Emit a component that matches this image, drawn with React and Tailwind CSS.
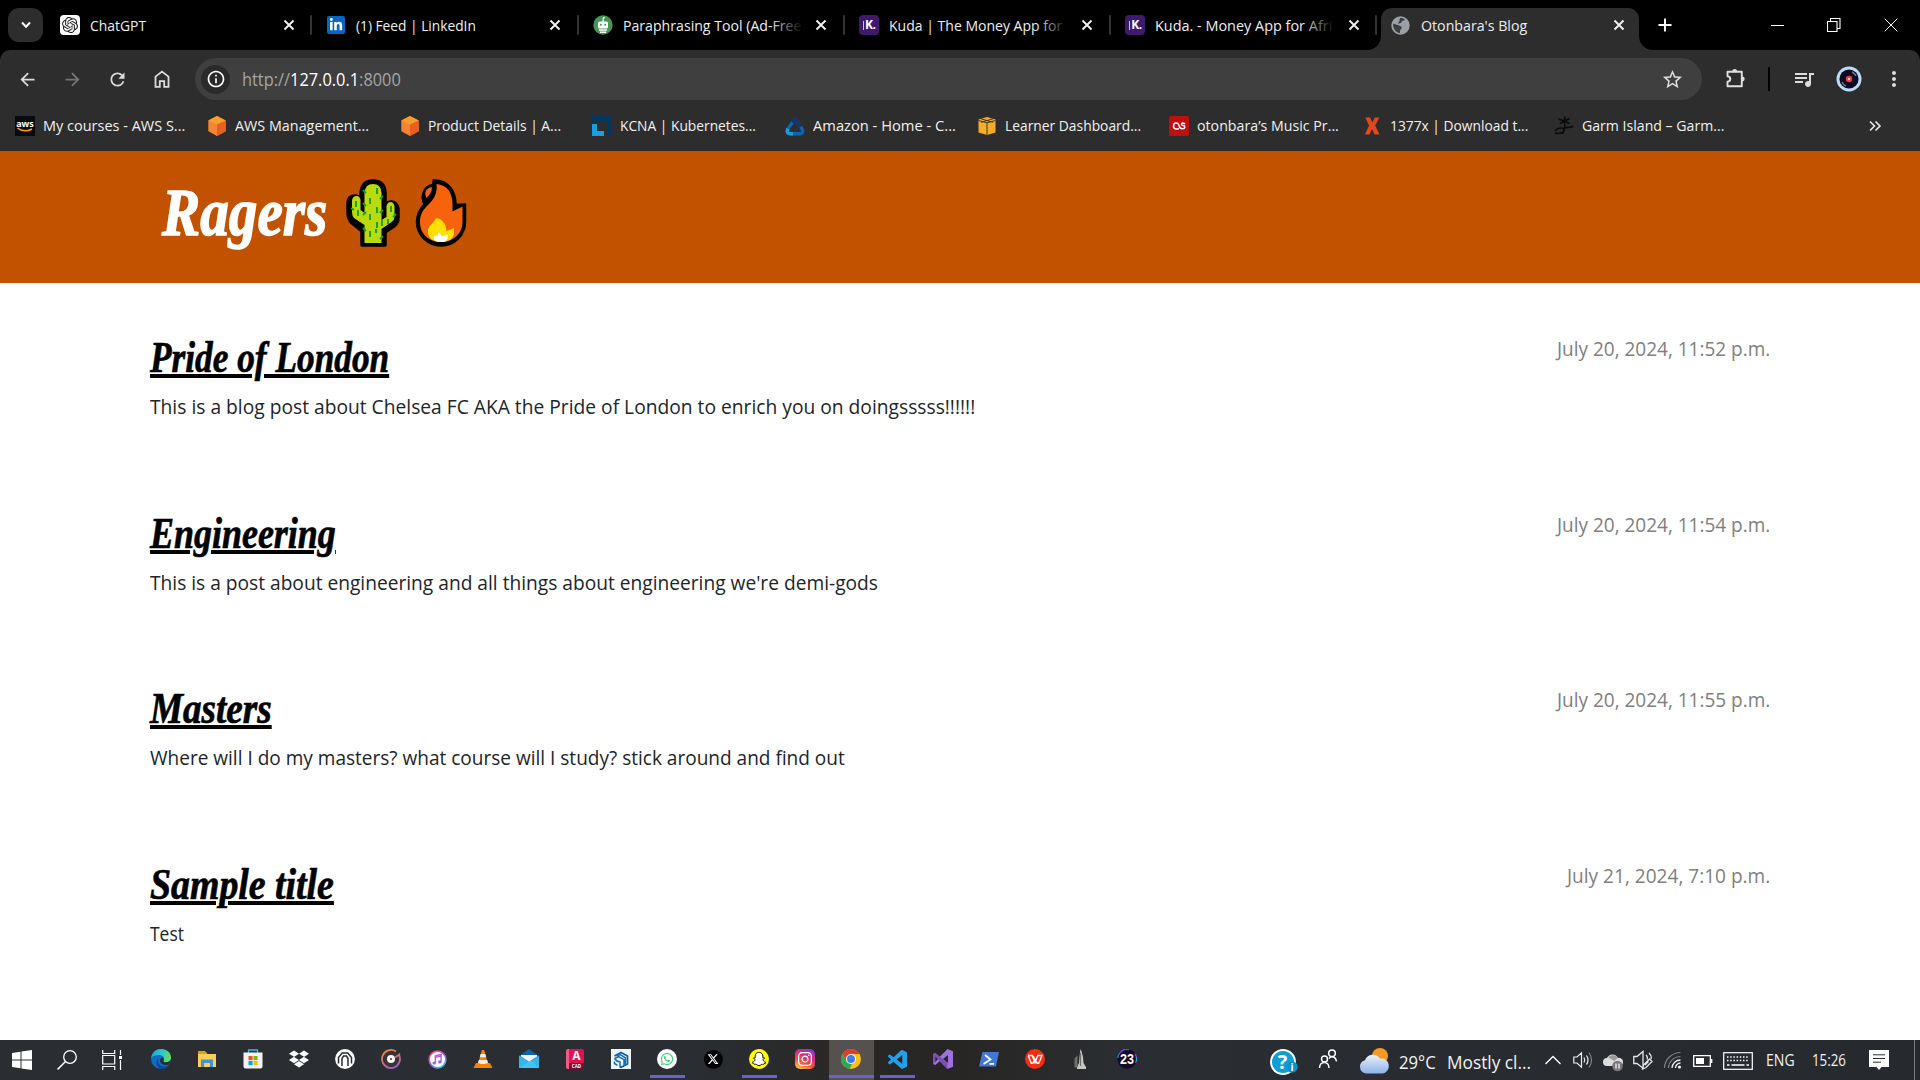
import React, { useLayoutEffect, useRef } from "react";
import { SiOpenai } from "react-icons/si";
import { FaDropbox, FaInstagram, FaLinkedinIn, FaSnapchatGhost, FaWhatsapp } from "react-icons/fa";
import { FaXTwitter } from "react-icons/fa6";
import { BiLogoVisualStudio } from "react-icons/bi";
import {
  MdArrowBack, MdArrowForward, MdRefresh, MdInfoOutline, MdStarBorder,
  MdOutlineQueueMusic, MdMoreVert,
} from "react-icons/md";

/* Text squeezed or stretched horizontally to a fixed width. */
function Fit({ w, className = "", children }) {
  const ref = useRef(null);
  useLayoutEffect(() => {
    const el = ref.current;
    el.style.transform = `scaleX(${w / el.offsetWidth})`;
  }, [w]);
  return (
    <span className="block shrink-0" style={{ width: w }}>
      <span ref={ref} className={`inline-block origin-left whitespace-nowrap align-top ${className}`}>{children}</span>
    </span>
  );
}

function Svg({ s = 20, vb = "0 0 20 20", children, className = "" }) {
  return (
    <svg width={s} height={s} viewBox={vb} className={`shrink-0 ${className}`} fill="none">
      {children}
    </svg>
  );
}

/* ---------- tab strip ---------- */

const Kuda = () => (
  <span className="flex h-5 w-5 items-center justify-center gap-px rounded-[4px] bg-[#40196d] text-[12px] font-bold leading-none tracking-tighter text-white">
    <span className="h-[9px] w-[1.5px] bg-[#cbbfd8]" />
    <span>K.</span>
  </span>
);

const Quill = () => (
  <Svg>
    <circle cx="10" cy="10" r="9.7" fill="#499557" />
    <path d="M10.2 7V3.2l1.6-1" stroke="#fff" strokeWidth="1.2" />
    <rect x="5" y="6.5" width="10" height="7" rx="1.6" fill="#fff" />
    <circle cx="7.8" cy="9.7" r="1" fill="#499557" />
    <circle cx="12.2" cy="9.7" r="1" fill="#499557" />
    <path d="M6 15h8M7 17.2h6" stroke="#fff" strokeWidth="1.4" />
  </Svg>
);

const CloseX = () => (
  <Svg s={12} vb="0 0 12 12"><path d="M1.500 1.500l9 9M10.500 1.500l-9 9" stroke="#f2f2f2" strokeWidth="1.900" /></Svg>
);

const Globe = () => (
  <Svg s={19} vb="0 0 19 19">
    <circle cx="9.500" cy="9.500" r="9.200" fill="#9aa0a6" />
    <path d="M2.300 7.500c2 .5 3 1.500 4.500 1.500s2.200 1.500 3.700 1.500v2.500c-1.500 0-1.500 1.500-1.500 4C4.500 16.500 1.500 12 2.300 7.500zM9 2.200c2-.3 3.500.3 4.700 1.300-.7 1.500-1.700 1-2.700 1.500s0 2-1.500 2-1.500 1-2 1c-.8-1.500 1-2 1-3.200C8.500 4 8.500 3 9 2.200z" fill="#3b3d3f" />
  </Svg>
);

const tabs = [
  { t: "ChatGPT", w: 56.5, icon: <span className="flex h-5 w-5 items-center justify-center rounded-[4px] bg-white text-[#222]"><SiOpenai size={16} /></span> },
  { t: "(1) Feed | LinkedIn", w: 120, icon: <span className="ml-px flex h-[18px] w-[18px] items-center justify-center rounded-[2px] bg-[#0a66c2] text-white"><FaLinkedinIn size={14} /></span> },
  { t: "Paraphrasing Tool (Ad-Free", w: 178, icon: <Quill />, fade: true },
  { t: "Kuda | The Money App for", w: 173, icon: <Kuda />, fade: true },
  { t: "Kuda. - Money App for Afri", w: 177, icon: <Kuda />, fade: true },
];

function Tab({ t, w, icon, fade }) {
  return (
    <div className="flex h-[34px] w-[266.3px] items-center pl-[14px]">
      <span className="w-[30px]">{icon}</span>
      <span className="relative w-[188px]">
        <Fit w={w}>{t}</Fit>
        {fade && <span className="absolute inset-y-0 left-[146px] w-[34px] bg-gradient-to-r from-transparent to-black" />}
      </span>
      <span className="flex w-[21px] justify-center"><CloseX /></span>
      <span className="ml-auto h-5 w-[2px] rounded bg-[#333]" />
    </div>
  );
}

function TabStrip() {
  return (
    <div className="flex h-[50px] bg-black pt-2 text-[15px] leading-[34px] text-[#eee]">
      <div className="ml-2 mr-[3px] flex h-[34px] w-[35px] items-center justify-center rounded-[11px] bg-[#2d2d2d]">
        <Svg s={14} vb="0 0 14 14"><path d="M3 4.5l4 4.200 4-4.200" stroke="#fff" strokeWidth="2" /></Svg>
      </div>
      {tabs.map((x) => <Tab key={x.t} {...x} />)}
      <div className="relative ml-[3.5px] flex h-[42px] w-[258px] items-start rounded-t-[11px] bg-[#2d2d2d] pl-[10px]">
        <Svg s={14} vb="0 0 14 14" className="absolute -left-[14px] bottom-0"><path d="M14 0v14H0A14 14 0 0 0 14 0z" fill="#2d2d2d" /></Svg>
        <Svg s={14} vb="0 0 14 14" className="absolute -right-[14px] bottom-0"><path d="M0 0v14h14A14 14 0 0 1 0 0z" fill="#2d2d2d" /></Svg>
        <span className="flex h-[34px] w-[30px] items-center"><Globe /></span>
        <Fit w={106}>Otonbara's Blog</Fit>
        <span className="ml-[86px] flex h-[34px] w-[18px] items-center"><CloseX /></span>
      </div>
      <div className="ml-[14px] flex h-[34px] w-6 items-center justify-center">
        <Svg s={14} vb="0 0 14 14"><path d="M7 .500v13M.500 7h13" stroke="#fff" strokeWidth="1.900" /></Svg>
      </div>
      <div className="ml-auto flex h-[34px] items-center text-white">
        <span className="flex w-[57px] justify-center"><span className="h-px w-[13px] bg-white" /></span>
        <span className="flex w-[56px] justify-center">
          <Svg s={14} vb="0 0 14 14"><path d="M.5 3.500h9.500V13.500H.5zM3.500 3.500V.5H13v10h-3" stroke="#fff" strokeWidth="1.100" /></Svg>
        </span>
        <span className="flex w-[58px] justify-center">
          <Svg s={14} vb="0 0 14 14"><path d="M.7.700l12.600 12.600M13.300.700L.700 13.300" stroke="#fff" strokeWidth="1" /></Svg>
        </span>
      </div>
    </div>
  );
}

/* ---------- toolbar and bookmarks ---------- */

function Toolbar() {
  return (
    <div className="flex h-[58px] items-center text-[#dcdcdc]">
      <span className="flex w-[45px] justify-center pl-[10px]"><MdArrowBack size={21} /></span>
      <span className="flex w-[45px] justify-center pl-[10px] text-[#757575]"><MdArrowForward size={21} /></span>
      <span className="flex w-[45px] justify-center pl-[10px]"><MdRefresh size={21} /></span>
      <span className="flex w-[45px] justify-center pl-[9px]">
        <Svg><path d="M3.500 17.800V7.600L10 2.600l6.500 5v10.200h-4.300v-5.600H7.800v5.600z" stroke="#dcdcdc" strokeWidth="1.800" /></Svg>
      </span>
      <div className="ml-[15px] flex h-[42px] w-[1507px] items-center rounded-full bg-[#3f3f3f] pl-[6px] pr-[18px]">
        <span className="mr-[12px] flex h-[29px] w-[29px] items-center justify-center rounded-full bg-[#2a2a2a] text-white"><MdInfoOutline size={20} /></span>
        <Fit w={159} className="text-[17.5px] leading-[42px] text-[#a5a5a5]">http://<span className="text-white">127.0.0.1</span>:8000</Fit>
        <span className="ml-auto"><MdStarBorder size={23} /></span>
      </div>
      <span className="ml-[23px]">
        <Svg s={22} vb="0 0 22 22">
          <path d="M2.500 3.700h14.300v14.600H2.500v-4.600q2.800-.4 2.800-2.700T2.500 8.300z" stroke="#e0e0e0" strokeWidth="1.900" strokeLinejoin="round" />
          <path d="M7.300 3.500a2.400 2.600 0 0 1 4.800 0zM17 8.600a2.600 2.400 0 0 1 0 4.800z" fill="#e0e0e0" />
        </Svg>
      </span>
      <span className="ml-[21px] h-6 w-[1.500px] bg-black" />
      <span className="ml-[22px]"><MdOutlineQueueMusic size={24} /></span>
      <span className="ml-[20px]">
        <Svg s={26} vb="0 0 26 26">
          <circle cx="13" cy="13" r="12.500" fill="#b9dcfb" /><circle cx="13" cy="13" r="9.600" fill="#0d0a20" />
          <path d="M16 6a8 8 0 0 1 4 4M10 20a8 8 0 0 1-4-4" stroke="#777" strokeWidth="1.500" />
          <circle cx="13" cy="13" r="3.200" fill="#e8305f" /><circle cx="13" cy="13" r="1.300" fill="#ffd45c" />
        </Svg>
      </span>
      <span className="ml-[20px]"><MdMoreVert size={24} /></span>
    </div>
  );
}

const AwsCube = () => (
  <Svg><path d="M10 0l8.700 4.500v10.800L10 20l-8.700-4.700V4.500z" fill="#f58534" /><path d="M10 0l8.700 4.500L10 8.600 1.300 4.500z" fill="#fb9d2c" /><path d="M10 8.600l8.700-4.100v10.800L10 20z" fill="#e8601f" /></Svg>
);

const bookmarks = [
  { t: "My courses - AWS S...", w: 142, icon: (
    <Svg><rect width="20" height="20" fill="#070b10" /><text x="10" y="10.500" textAnchor="middle" fontSize="9" fontWeight="700" fill="#fff" fontFamily="Open Sans">aws</text><path d="M2.500 12.200c4.500 3.300 10.500 3.300 14.500.800" stroke="#f90" strokeWidth="1.600" /></Svg>) },
  { t: "AWS Management...", w: 134, icon: <AwsCube /> },
  { t: "Product Details | A...", w: 133, icon: <AwsCube /> },
  { t: "KCNA | Kubernetes...", w: 136, icon: (
    <Svg><path d="M0 0h20v20h-5V5H0z" fill="#04365f" /><path d="M0 8h5v7h7v5H0z" fill="#189fdf" /></Svg>) },
  { t: "Amazon - Home - C...", w: 143, icon: (
    <Svg><path d="M10 2.500C7 8 2.300 12 2.300 15.300c0 3 3.500 2.500 7.700 2.500s7.700.500 7.700-2.500C17.700 12 13 8 10 2.500z" stroke="#0b64b4" strokeWidth="3.400" strokeLinejoin="round" /><path d="M7.500 6.500L10 2.500c2 3.500 4.200 6 5.800 8.300" stroke="#15336d" strokeWidth="3.400" strokeLinejoin="round" /><path d="M3 12.500c-2.500 6 2 5.300 5 5.300" stroke="#179bdd" strokeWidth="3.400" /></Svg>) },
  { t: "Learner Dashboard...", w: 136.5, icon: (
    <Svg><path d="M10 1l8.500 2.500v13L10 19l-8.500-2.500v-13z" fill="#f5ad27" /><path d="M1.500 4.500L10 6.800l8.500-2.300M10 7v12M4 2.800l12 3.500M16 2.800L4 6.300" stroke="#2d2d2d" strokeWidth=".9" /></Svg>) },
  { t: "otonbara’s Music Pr...", w: 142, icon: (
    <Svg><rect width="20" height="20" rx="1.500" fill="#c00d0d" /><path d="M9.800 12.200c-1 1.300-5.300 1.600-5.300-2.200 0-3.700 4.400-3.700 5.200-1.200.700 2.500 1.500 4 3.800 4 3 0 2.900-2.900.800-3.200-2.500-.400-2.200-2.600-.300-2.600 1.200 0 1.700.600 1.900 1.300" stroke="#fff" strokeWidth="1.500" /></Svg>) },
  { t: "1377x | Download t...", w: 138, icon: (
    <Svg><path d="M3.200 1.500h4.900l2.200 5 2.500-5h4.600l-4.200 8 4.300 9h-5l-2.500-5.500-2.400 5.500H2.900l4.200-9z" fill="#e2471d" /></Svg>) },
  { t: "Garm Island – Garm...", w: 142, icon: (
    <Svg><path d="M10 5c1.600 4.500 1 8-1.500 13M10 5L4.500 3M10 5L6 7.500M10 5l5.500-2.500M10 5l5.500 2.500M10 5l1-4.500M1 15c3-4 8-3.600 9-1.500 1 3-6 5-9 3.500M10 11.500c5 .5 8-.5 9.500-1" stroke="#0a0a0a" strokeWidth="1.500" /></Svg>) },
];

function Bookmarks() {
  return (
    <div className="flex h-[43px] items-center pb-[8px] pl-[15px] text-[15px] leading-[35px] text-[#f1f1f1]">
      {bookmarks.map((b) => (
        <div key={b.t} className="flex w-[192.4px] shrink-0 items-center gap-2">
          {b.icon}
          <Fit w={b.w} className="relative -top-[0.5px]">{b.t}</Fit>
        </div>
      ))}
      <span className="ml-[121px]">
        <Svg s={14} vb="0 0 14 14"><path d="M2 2.500L6.500 7 2 11.500M7.500 2.500L12 7l-4.500 4.500" stroke="#e8e8e8" strokeWidth="1.600" /></Svg>
      </span>
    </div>
  );
}

/* ---------- blog ---------- */

const Cactus = () => (
  <svg width="54" height="68" viewBox="0 0 54 68" fill="none">
    <path d="M16 66V52L6 44Q2 40 2 33V24q0-7 7-7 6 0 6 7v0V16Q15 2 27 2t12 13v14q1-6 6-6 6 0 7 7v9q0 5-4 8l-9 6v13z" fill="#000" stroke="#000" strokeWidth="3.500" strokeLinejoin="round" />
    <path d="M18.500 64V46L8 39q-2-2-2-6v-12q1-4 4.500-4t4 4v10l4 3V14Q19 5 27 5t8.500 9v27l5-3V27q1-4 4-4t4 4v11q0 3-3 5l-10 7v14z" fill="#bada0e" />
    <path d="M31 9v6M24 19v6M31 28v6M24 35v6M31 43v6M24 52v6M30 50v4M10 22v6M12 31v6M45 27v6M42 40v5M36 41v6" stroke="#16a51b" strokeWidth="2" />
    <path d="M17 11l3 3M17 24l3 3M34 20l3-3M34 34l3-3M17 36l3-3M17 49l3 3M34 60l3-3M5 29l3 2M47 38l3-3" stroke="#16a51b" strokeWidth="2" />
  </svg>
);

const Fire = () => (
  <svg width="52" height="68" viewBox="0 0 52 68" fill="none">
    <path d="M18.500 1.500C33 1 40.500 12 40.500 26l9.500-.500v17C50 56 39 66.500 26 66.500S2 56 2 43c0-9 4-14 8-18-4-4-3-18 8.500-19z" fill="#000" stroke="#000" strokeWidth="2.500" strokeLinejoin="round" />
    <path d="M21.500 5c11 1 16 9 16 20v7.500l10-5V43c0 12-9.500 20-21.500 20S5 55 5 43c0-9 4-13 9-18 6-6 8.500-12 7.500-20z" fill="#f7630c" />
    <path d="M11.500 19q-4-9 5.500-11 0 6-5.500 11z" fill="#f7630c" />
    <path d="M21 39c6 1 10 5 10.500 13l7.500-3v6c-1 5-6 8-13 8-9 0-14-5-13-12 1-5 6-7 8-12z" fill="#ffe000" />
    <path d="M23.500 53.500c2 1 3 3 3 4l6-2c1 5-1.500 7.500-6.500 7.500-5 0-8-2-7-6l3.500-.500z" fill="#fff" />
  </svg>
);

const posts = [
  { t: "Pride of London", tw: 239, b: "This is a blog post about Chelsea FC AKA the Pride of London to enrich you on doingsssss!!!!!!", bw: 825.5, d: "July 20, 2024, 11:52 p.m.", dw: 213.5 },
  { t: "Engineering", tw: 185.5, b: "This is a post about engineering and all things about engineering we're demi-gods", bw: 728, d: "July 20, 2024, 11:54 p.m.", dw: 213.5 },
  { t: "Masters", tw: 121.5, b: "Where will I do my masters? what course will I study? stick around and find out", bw: 694.5, d: "July 20, 2024, 11:55 p.m.", dw: 213.5 },
  { t: "Sample title", tw: 184, b: "Test", bw: 34, d: "July 21, 2024, 7:10 p.m.", dw: 203 },
];

function Blog() {
  return (
    <main className="flex h-[889px] flex-col bg-white">
      <header className="flex h-[132px] shrink-0 bg-[#c25100] pl-[162px]">
        <Fit w={165} className="mt-[21px] font-['Liberation_Serif',serif] text-[68px] font-bold italic leading-[80px] text-white [-webkit-text-stroke:1.5px_white]">Ragers</Fit>
        <div className="ml-[19px] mt-[28px] flex gap-[15px]"><Cactus /><Fire /></div>
      </header>
      <section className="flex flex-col px-[150px] pt-[51px]">
        {posts.map((p) => (
          <article key={p.t} className="flex h-[175.6px] items-start justify-between text-[20px] leading-[30px] text-[#212529]">
            <div>
              <h2><Fit w={p.tw} className="font-['Liberation_Serif',serif] text-[44px] font-bold italic leading-[48px] text-black underline decoration-[4px] underline-offset-[2px] [-webkit-text-stroke:0.7px_black]">{p.t}</Fit></h2>
              <p className="mt-[10px]"><Fit w={p.bw}>{p.b}</Fit></p>
            </div>
            <Fit w={p.dw} className="text-[#808080]">{p.d}</Fit>
          </article>
        ))}
      </section>
    </main>
  );
}

/* ---------- taskbar ---------- */

const Windows = () => <Svg><path d="M0 3l8.500-1.200v7.700H0zM9.500 1.600L20 0v9.500H9.500zM0 10.500h8.500v7.700L0 17zM9.500 10.500H20V20l-10.500-1.500z" fill="#fff" /></Svg>;
const Search = () => <Svg><circle cx="13" cy="7" r="6.300" stroke="#fff" strokeWidth="1.300" /><path d="M8.500 11.500L.6 19.400" stroke="#fff" strokeWidth="1.500" /></Svg>;
const TaskView = () => <Svg><path d="M.7 0v3.500h12V0M.7 20v-3.500h12V20M.7 5.500h12v8.500H.7zM18.500 0v5M18.500 10v10" stroke="#fff" strokeWidth="1.200" /><rect x="17" y="6" width="3" height="3" fill="#fff" /></Svg>;

const apps = [
  { n: "edge", i: (
    <Svg>
      <defs>
        <linearGradient id="eg" x1="0" y1="0" x2="20" y2="8" gradientUnits="userSpaceOnUse"><stop stopColor="#1ba0e0" /><stop offset=".5" stopColor="#2cc4cf" /><stop offset="1" stopColor="#6be04c" /></linearGradient>
      </defs>
      <circle cx="10" cy="10" r="10" fill="#0f6cc4" />
      <path d="M0 9.500C1 3 5 0 10 0c6 0 10 4 10 8.500 0 3-2.300 4.800-5 4.800-2.200 0-3.200-.8-2.500-1.800C14 9 12 6 8.500 6 4.500 6 1 7 0 9.500z" fill="url(#eg)" />
      <path d="M7.500 9c-2 4 1 8.500 5.500 8.500 2.500 0 4.500-.9 5.700-2C17 18.500 13.500 20 10.500 20 6 19.500 3.500 13 7.500 9z" fill="#0a4a94" />
      <path d="M12.500 11.500c-.8 1 .5 1.800 2.500 1.800 2 0 3.500-.8 4.300-2-.1 2-.5 3-1.300 4.200-4 1.500-8.500 0-9-3.500C8.800 9.500 11 8 12.300 9c.7.800.6 1.800.2 2.500z" fill="#2a2d31" />
    </Svg>) },
  { n: "explorer", i: <Svg><path d="M1 2h7l2 2v5H1z" fill="#dd9e0f" /><path d="M1 5h18v13H1z" fill="#fdcf55" /><path d="M4 18v-7.500h12V18h-3v-4H7v4z" fill="#3d93dc" /></Svg> },
  { n: "store", i: <Svg><path d="M5.500 4V1h9v3" stroke="#3db5e8" strokeWidth="1.300" /><path d="M.5 3.500h19v14a2 2 0 0 1-2 2h-15a2 2 0 0 1-2-2z" fill="#f2f2f2" /><path d="M5.500 7H9.600v4.100H5.500z" fill="#f25022" /><path d="M10.500 7h4.100v4.100h-4.100z" fill="#7fba00" /><path d="M5.500 12h4.100v4.100H5.500z" fill="#00a4ef" /><path d="M10.500 12h4.100v4.100h-4.100z" fill="#ffb900" /></Svg> },
  { n: "dropbox", i: <FaDropbox size={20} color="#fff" /> },
  { n: "arch", i: <Svg><circle cx="10" cy="10" r="9.900" fill="#fff" /><path d="M3.500 14.500V8.500l3.700-4.500h5.600l3.700 4.500v6M7 17V9.500L8.500 7h3L13 9.500V17" stroke="#2a2d31" strokeWidth="1.500" /></Svg> },
  { n: "groove", i: (
    <Svg>
      <defs><linearGradient id="gr" x1="4" y1="0" x2="14" y2="20" gradientUnits="userSpaceOnUse"><stop stopColor="#f08a3c" /><stop offset=".55" stopColor="#d06a7e" /><stop offset="1" stopColor="#8f62d0" /></linearGradient></defs>
      <circle cx="10" cy="10" r="8" fill="#3a3433" /><path d="M15 2.500A9 9 0 1 0 19 10c0-2-.8-3-.8-4.500l-4 3" stroke="url(#gr)" strokeWidth="1.800" /><circle cx="10" cy="10" r="4" fill="#f5f5f5" /><circle cx="10" cy="10" r="1.100" fill="#444" />
    </Svg>) },
  { n: "itunes", i: (
    <Svg s={19}>
      <defs><linearGradient id="it" x1="3" y1="2" x2="15" y2="19" gradientUnits="userSpaceOnUse"><stop stopColor="#f74a7c" /><stop offset=".5" stopColor="#b05be8" /><stop offset="1" stopColor="#2bc4f3" /></linearGradient></defs>
      <circle cx="10" cy="10" r="8.800" fill="#fff" stroke="url(#it)" strokeWidth="1.700" /><path d="M7.800 13.500V6l6-1.300v7.500M7.800 7.800l6-1.300" stroke="url(#it)" strokeWidth="1.500" /><ellipse cx="6.600" cy="13.700" rx="1.900" ry="1.600" fill="#9a62ea" /><ellipse cx="12.500" cy="12.500" rx="1.900" ry="1.600" fill="#9a62ea" />
    </Svg>) },
  { n: "vlc", i: <Svg><path d="M3 14h14l2.500 5H.5z" fill="#f58300" /><path d="M8.800 1h2.400L15 15q-5 2.500-10 0z" fill="#f58300" /><path d="M7.700 5h4.600l.9 3.200H6.800zM5.800 11h8.400l.8 3q-5 2-10 0z" fill="#eee" /></Svg> },
  { n: "mail", i: <Svg><path d="M0 7l10-7 10 7-10 6z" fill="#0e63ad" /><path d="M0 6.500l10 6.500 10-6.500V19H0z" fill="#35b5ec" /><path d="M0 19l12-7.500L20 19z" fill="#3fc5f5" /><path d="M2 6h16v1.500L10 12.800 2 7.500z" fill="#eef6fb" /></Svg> },
  { n: "autocad", i: (
    <span className="flex h-5 w-[18px] flex-col items-center rounded-[2px] border-l-[3px] border-[#f45a83] bg-[linear-gradient(#e51050_69%,#7d0b31_69%)] text-white">
      <span className="h-[14px] text-[12px] font-bold leading-[14px]">A</span>
      <span className="h-[6px] text-[4.5px] font-bold leading-[6px]">CAD</span>
    </span>) },
  { n: "sketchup", i: <Svg><rect width="20" height="20" fill="#eef3f7" /><path d="M3.500 7L10 3.500l6.500 3.500v8L10 18.300 8.500 17.500" stroke="#0b5d9e" strokeWidth="1.700" /><path d="M3.500 9.500l4-1.800 5.500 3v6M3.500 9.500q2 3 5.500 3.500v4.500M3.500 12.500v2l3 1.800M5.500 6.500l4-.8 5 3.300v6.500" stroke="#1470b5" strokeWidth="1.500" /></Svg> },
  { n: "whatsapp", run: true, i: <span className="flex h-5 w-5 items-center justify-center rounded-full bg-white"><FaWhatsapp size={14} color="#25d366" /></span> },
  { n: "x", i: <span className="flex h-[19px] w-[19px] items-center justify-center rounded-full bg-black"><FaXTwitter size={12} color="#fff" /></span> },
  { n: "snapchat", run: true, i: <span className="flex h-5 w-5 items-center justify-center rounded-full bg-[#fffc00]"><FaSnapchatGhost size={14} color="#fff" stroke="#111" strokeWidth={36} /></span> },
  { n: "instagram", i: <span className="flex h-5 w-5 items-center justify-center rounded-[5px] bg-[linear-gradient(25deg,#fdc84e_5%,#f2523b_35%,#d62d85_62%,#7638e0)]"><FaInstagram size={16} color="#fff" /></span> },
  { n: "chrome", run: true, active: true, i: <Svg><circle cx="10" cy="10" r="10" fill="#fbc116" /><path d="M1.340 5A10 10 0 0 1 18.660 5H10L5.670 12.500z" fill="#e33b2e" /><path d="M1.340 5l4.330 7.500L10 15l1 0-2.500 4.900A10 10 0 0 1 1.340 5z" fill="#2da94f" /><circle cx="10" cy="10" r="5" fill="#fff" /><circle cx="10" cy="10" r="4" fill="#3b7ded" /></Svg> },
  { n: "vscode", run: true, i: <BiLogoVisualStudio size={23} color="#23a0ec" /> },
  { n: "visualstudio", i: <Svg><path d="M14.500 0L20 2.300v15.400L14.500 20 6.800 12.300 2.200 16 0 15V5l2.200-1 4.600 3.700zM15 6l-5 4 5 4zM2.200 7v6L5 10z" fill="#a070dd" fillRule="evenodd" /><path d="M0 5l2.200-1 12.300 10v6L6.800 12.300 5 10 2.200 7v6L0 15z" fill="#7a4fb8" /></Svg> },
  { n: "powershell", i: <Svg><path d="M3.500 3H20l-3 14.500H0z" fill="#4377d6" /><path d="M6 6l5.500 4.500L4.500 15M10.500 14.800h4.500" stroke="#fff" strokeWidth="1.700" /></Svg> },
  { n: "wps", i: <Svg><circle cx="10" cy="10" r="10" fill="#fa2b13" /><path d="M3 6.500h4.200l2.800 7 2.800-7H17l-3.300 7.800h-1.500L8 6.800M3.200 6.500l3.100 7.800h1.500l2.200-4" stroke="#fff" strokeWidth="1.400" /></Svg> },
  { n: "statue", i: <Svg><path d="M9.500 0l1 2 1.500 6 .5 6 2.500 4v2H6v-2l2-4 .5-6z" fill="#c8c8c3" /><path d="M3.500 9.500l3-3v12h-3z" fill="#6f706d" /><path d="M9.500 4v13" stroke="#6e6e6a" strokeWidth="1.200" /></Svg> },
  { n: "23", i: <Svg><circle cx="10" cy="10" r="9.800" fill="#140c28" /><path d="M3 4a9 9 0 0 1 9-3.500M18 5a9 9 0 0 1 .5 9" stroke="#8142c9" strokeWidth="1.500" /><path d="M.8 9q0-3 2-5M19.600 8v4" stroke="#23b7c9" strokeWidth="1" /><text x="10" y="14.800" textAnchor="middle" fontSize="14" fontWeight="700" fill="#f4f4f4" fontFamily="Liberation Sans" textLength="14" lengthAdjust="spacingAndGlyphs">23</text></Svg> },
];

const Cell = ({ w, children }) => <span className="flex h-full shrink-0 items-center justify-center" style={{ width: w }}>{children}</span>;

function Tray() {
  return (
    <div className="ml-auto flex h-full items-center text-[#f2f2f2]">
      <Cell w={46}>
        <Svg s={30} vb="0 0 30 30" className="ml-[2px] mt-[5px]"><circle cx="14" cy="14" r="13" fill="#fff" /><circle cx="14" cy="14" r="11" fill="#0f9fd6" /><text x="13.500" y="21" textAnchor="middle" fontSize="20" fontWeight="700" fill="#fff" fontFamily="Open Sans">?</text><circle cx="23" cy="19" r="5.800" fill="#0f8fc9" /><text x="23" y="23" textAnchor="middle" fontSize="10" fontWeight="700" fill="#fff" fontFamily="Open Sans">i</text></Svg>
      </Cell>
      <Cell w={44}>
        <Svg className="mb-[3px]"><circle cx="6.500" cy="10" r="3" stroke="#fff" strokeWidth="1.500" /><circle cx="14" cy="4.200" r="3.300" stroke="#fff" strokeWidth="1.500" /><path d="M1.500 19c0-7.500 9.500-7.500 9.500 0M11 9.500q1.500-1.700 3-1.700 3.500 0 4.500 4.500" stroke="#fff" strokeWidth="1.500" /></Svg>
      </Cell>
      <Cell w={49}>
        <Svg s={32} vb="0 0 32 32" className="mr-[2px] mt-[4px]">
          <defs><linearGradient id="cl" x1="0" y1="10" x2="0" y2="27" gradientUnits="userSpaceOnUse"><stop stopColor="#e3eefb" /><stop offset="1" stopColor="#8fb3ea" /></linearGradient></defs>
          <circle cx="22" cy="10" r="8" fill="#f59a23" /><path d="M8 27.500a6.800 6.800 0 0 1-1-13.300A8.500 8.500 0 0 1 22 12.500 7.500 7.500 0 0 1 24.500 27.500z" fill="url(#cl)" />
        </Svg>
      </Cell>
      <span className="mt-[2px] flex">
        <Fit w={37} className="text-[18.5px] leading-[37px]">29°C</Fit>
        <span className="w-[11px]" />
        <Fit w={84} className="text-[18.5px] leading-[37px]">Mostly cl...</Fit>
      </span>
      <Cell w={37}><Svg s={18} vb="0 0 18 18" className="ml-[6px]"><path d="M1.500 13L9 5.500l7.500 7.500" stroke="#fff" strokeWidth="1.300" /></Svg></Cell>
      <Cell w={30}><Svg><path d="M.8 7v6H4l4.500 4.200V2.800L4 7zM11 7.500q1.500 2.500 0 5M13.500 5.500q3 4.500 0 9" stroke="#eee" strokeWidth="1.200" /><path d="M16 2.500q5 7.500 0 15" stroke="#888" strokeWidth="1.100" /></Svg></Cell>
      <Cell w={30}><Svg className="mt-[3px]"><path d="M4 14a4 4 0 0 1 0-8 6 6 0 0 1 11 0 4 4 0 0 1 2 8z" fill="#ddd" /><path d="M5 5a6 5 0 0 1 10 1l-4 3z" fill="#9a9a9a" /><circle cx="14.500" cy="14" r="5.300" fill="#777" /><path d="M13 11.500v5M16 11.500v5" stroke="#fff" strokeWidth="1.200" /></Svg></Cell>
      <Cell w={30}><Svg><path d="M.8 6.500v7H4l6 4.700V1.500L4 6.500zM13 5q2 2 1 4.500M16 3q3 3 2 6M9.500 19l1-4 6-6 2.500 2.500-6 6zM12 15l3.500-3.500" stroke="#e8e8e8" strokeWidth="1.300" /></Svg></Cell>
      <Cell w={30}><Svg><path d="M1.500 18A16 16 0 0 1 17.500 2.500M5.500 18A12 12 0 0 1 17.500 6.500" stroke="#7f8285" strokeWidth="1.200" /><path d="M9 18a8.500 8.500 0 0 1 8.500-8M12.500 18a5 5 0 0 1 5-5" stroke="#eee" strokeWidth="1.300" /><circle cx="16.500" cy="17" r="1.500" fill="#fff" /></Svg></Cell>
      <Cell w={30}><Svg className="mt-[2px]"><path d="M.7 4.700h16.600v10.600H.7zM18.700 8v4" stroke="#fff" strokeWidth="1.300" /><path d="M3 7h8v6H3z" fill="#fff" /></Svg></Cell>
      <Cell w={40}><svg width="30" height="18" viewBox="0 0 30 18" fill="none" className="mt-px"><rect x=".7" y=".7" width="28.600" height="16.600" stroke="#fff" strokeWidth="1.200" /><path d="M4 5h22M4 8.500h22" stroke="#fff" strokeWidth="1.300" strokeDasharray="1.500 1.700" /><path d="M4 13h2.500M8.500 13h13M23.500 13H26" stroke="#fff" strokeWidth="1.300" /></svg></Cell>
      <span className="ml-[8px] flex">
        <Fit w={29} className="text-[16px] leading-[38px]">ENG</Fit>
        <span className="w-[17px]" />
        <Fit w={34} className="text-[16px] leading-[38px]">15:26</Fit>
      </span>
      <Cell w={66}><Svg><path d="M0 0h20v17h-7.500L10 20l-2.500-3H0z" fill="#fff" /><path d="M4 4.800h12M4 8.500h12M4 12.200h8" stroke="#2a2d31" strokeWidth="1" /></Svg></Cell>
      <span className="ml-[2px] mr-[5px] h-full w-px bg-[#777a7d]" />
    </div>
  );
}

function Taskbar() {
  return (
    <footer className="flex h-10 bg-[linear-gradient(90deg,#2a2e33_0%,#2a2e33_35%,#292725_45%,#282624_50%,#2a2d31_58%,#26292e_100%)]">
      {[<Windows key="w" />, <Search key="s" />, <TaskView key="t" />].map((x, i) => (
        <span key={i} className="flex h-[39px] w-[45px] items-center justify-center pr-px">{x}</span>
      ))}
      <div className="ml-[3px] flex">
        {apps.map((a) => (
          <span key={a.n} className="relative flex w-[46px] items-center justify-center pb-[2px]">
            {a.active && <span className="absolute inset-x-0 inset-y-0 mx-auto w-[45px] bg-[#54514f]" />}
            <span className="relative">{a.i}</span>
            {a.run && <span className={`absolute bottom-[2px] h-[3px] bg-[#6960d3] ${a.active ? "w-[45px]" : "w-[35px]"}`} />}
          </span>
        ))}
      </div>
      <Tray />
    </footer>
  );
}

export default function App() {
  return (
    <div className="flex h-[1080px] w-[1920px] flex-col overflow-hidden bg-black font-['Open_Sans','Noto_Sans',sans-serif]">
      <TabStrip />
      <div className="h-[101px] rounded-t-[10px] bg-[#2d2d2d]">
        <Toolbar />
        <Bookmarks />
      </div>
      <Blog />
      <Taskbar />
    </div>
  );
}
